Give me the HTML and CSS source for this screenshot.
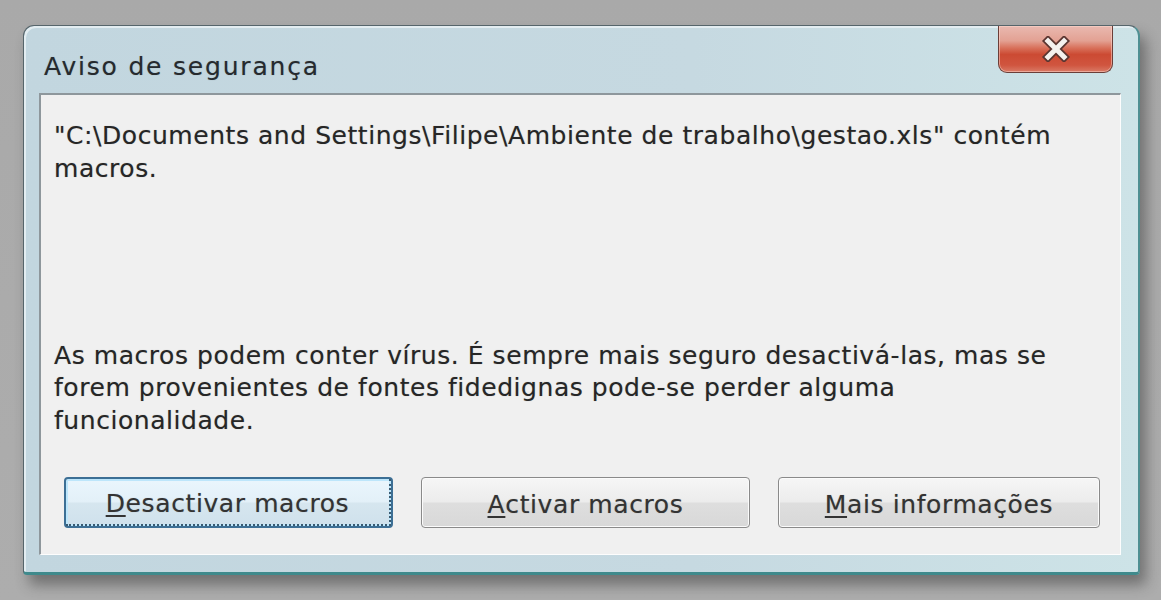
FILE: index.html
```html
<!DOCTYPE html>
<html lang="pt">
<head>
<meta charset="utf-8">
<title>Aviso de segurança</title>
<link rel="stylesheet" href="styles.css">
</head>
<body>
<div class="window">
  <div class="titlebar">
    <div class="title">Aviso de segurança</div>
    <div class="close">
      <svg width="34" height="26" viewBox="0 0 34 26">
        <path d="M9 5 L25 21 M25 5 L9 21" stroke="#5a3530" stroke-width="8.5" stroke-linecap="square" fill="none"/>
        <path d="M9 5 L25 21 M25 5 L9 21" stroke="#f4f1ee" stroke-width="5" stroke-linecap="square" fill="none"/>
      </svg>
    </div>
  </div>
  <div class="panel">
    <p class="msg">"C:\Documents and Settings\Filipe\Ambiente de trabalho\gestao.xls" contém<br>macros.</p>
    <div class="spacer"></div>
    <p class="msg">As macros podem conter vírus. É sempre mais seguro desactivá-las, mas se<br>forem provenientes de fontes fidedignas pode-se perder alguma<br>funcionalidade.</p>
    <div class="buttons">
      <button class="btn default"><span class="focus"><u>D</u>esactivar macros</span></button>
      <button class="btn"><u>A</u>ctivar macros</button>
      <button class="btn narrow"><u>M</u>ais informações</button>
    </div>
  </div>
</div>
</body>
</html>
```

FILE: styles.css
```css
html, body {
  margin: 0;
  height: 100%;
}
body {
  background: linear-gradient(#a9a9a9, #adadad);
  padding: 25px 0 0 23px;
  box-sizing: border-box;
  font-family: "DejaVu Sans", "Open Sans", sans-serif;
  overflow: hidden;
}
.window {
  width: 1117px;
  height: 550px;
  box-sizing: border-box;
  border: 1px solid #56656b;
  border-bottom: 3px solid #3f8a8c;
  border-right: 2px solid #4f8f92;
  border-radius: 11px 11px 4px 4px;
  background: linear-gradient(90deg, #c2d6df 0%, #c6d9e1 60%, #cde3e7 100%);
  box-shadow: 6px 10px 14px rgba(40, 40, 40, 0.45), inset 2px 2px 0 #e3edf1;
  display: flex;
  flex-direction: column;
}
.titlebar {
  height: 67px;
  display: flex;
  justify-content: space-between;
  align-items: flex-start;
  padding: 0 25px 0 20px;
}
.title {
  margin-top: 26px;
  font-size: 25px;
  line-height: 30px;
  color: #262a2e;
  letter-spacing: 1.8px;
  text-shadow: 0 0 1px rgba(30, 40, 50, 0.35);
}
.close {
  width: 115px;
  height: 47px;
  box-sizing: border-box;
  border: 1px solid #6b3e38;
  border-top: none;
  border-radius: 0 0 9px 9px;
  background: linear-gradient(#e9b9b0 0%, #e3a193 32%, #d8705a 48%, #cc4a33 62%, #d0553f 85%, #d97a66 100%);
  box-shadow: inset 0 0 0 1px rgba(255, 220, 210, 0.5);
  display: flex;
  align-items: center;
  justify-content: center;
}
.panel {
  flex: 1;
  margin: 0 17px 17px 15px;
  background: #f0f0f0;
  border-top: 2px solid #8e979c;
  border-left: 2px solid #8e979c;
  border-right: 1px solid #fdfdfd;
  border-bottom: 1px solid #fdfdfd;
  padding: 25px 20px 26px 13px;
  display: flex;
  flex-direction: column;
}
.msg {
  margin: 0;
  font-size: 25px;
  line-height: 32.5px;
  color: #262626;
  letter-spacing: 0.55px;
  white-space: nowrap;
  text-shadow: 0 0 1px rgba(0, 0, 0, 0.3);
}
.spacer {
  flex: 1;
}
.buttons {
  margin-top: 40px;
  display: flex;
  gap: 28px;
  padding-left: 10px;
}
.btn {
  width: 330px;
  height: 51px;
  font-family: inherit;
  font-size: 25px;
  letter-spacing: 0.6px;
  color: #333;
  text-shadow: 0 0 1px rgba(0, 0, 0, 0.3);
  border: 1px solid #8a8a8a;
  border-radius: 4px;
  background: linear-gradient(#f6f6f6 0%, #ececec 48%, #dedede 52%, #d8d8d8 100%);
  box-shadow: inset 0 0 0 1px #fbfbfb;
  padding: 3px 0 0;
  display: flex;
  align-items: center;
  justify-content: center;
}
.btn.narrow {
  width: 323px;
}
.btn.default {
  border: 2px solid #3c6f95;
  background: linear-gradient(#eaf6fd 0%, #e3f0f8 48%, #d6e6ef 52%, #cfe1ec 100%);
  box-shadow: inset 0 0 0 2px #bde6fb;
  padding: 0;
}
.focus {
  display: flex;
  align-items: center;
  justify-content: center;
  width: 100%;
  height: 100%;
  box-sizing: border-box;
  padding-top: 3px;
  border-bottom: 2px dotted #3b5a70;
  border-right: 2px dotted #3b5a70;
}
u {
  text-decoration-thickness: 2px;
  text-underline-offset: 3px;
}
```
